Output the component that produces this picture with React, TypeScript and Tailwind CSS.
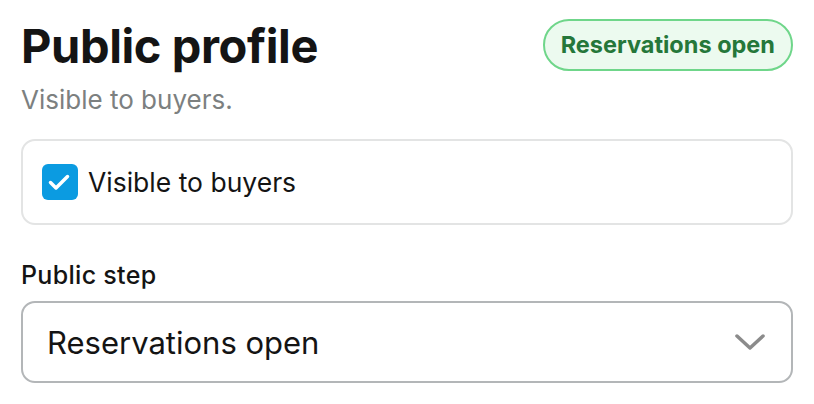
import React from "react";

export default function App() {
  return (
    <div
      className="w-[814px] h-[404px] bg-white px-[21px] pt-[18px] text-[#141414]"
      style={{ fontFamily: "Inter, 'Noto Sans', sans-serif" }}
    >
      <div className="flex items-start justify-between">
        <div>
          <h1 className="text-[47px] font-bold leading-[56px] tracking-[-0.4px]">Public profile</h1>
          <p className="mt-[11px] text-[26px] leading-[30px] text-[#7c8080]">Visible to buyers.</p>
        </div>
        <div className="mt-[1px] flex h-[52px] items-center rounded-full border-2 border-[#6fd68a] bg-[#ecfaef] px-[16px] text-[23.5px] font-bold text-[#25773a]">
          Reservations open
        </div>
      </div>

      <div className="mt-[24px] flex h-[86px] items-center gap-[10px] rounded-[14px] border-2 border-[#e3e4e4] px-[19px]">
        <div className="flex h-[36px] w-[36px] items-center justify-center rounded-[6px] bg-[#0b9be1]">
          <svg width="36" height="36" viewBox="0 0 36 36" fill="none">
            <path d="M8.5 18.5l5.5 5.5 11.5-11.5" stroke="white" strokeWidth="3.5" strokeLinecap="round" strokeLinejoin="round" />
          </svg>
        </div>
        <span className="text-[26.5px] leading-none">Visible to buyers</span>
      </div>

      <div className="mt-[35px] text-[25px] font-medium leading-[30px] tracking-[0.3px]">Public step</div>
      <div className="mt-[11px] flex h-[82px] items-center justify-between rounded-[14px] border-2 border-[#b3b6b8] pl-[24px] pr-[26px]">
        <span className="text-[31px] leading-none">Reservations open</span>
        <svg width="30" height="18" viewBox="0 0 30 18" fill="none">
          <path d="M2 3l13 12 13-12" stroke="#8b8b8b" strokeWidth="3.5" strokeLinecap="round" strokeLinejoin="round" />
        </svg>
      </div>
    </div>
  );
}
